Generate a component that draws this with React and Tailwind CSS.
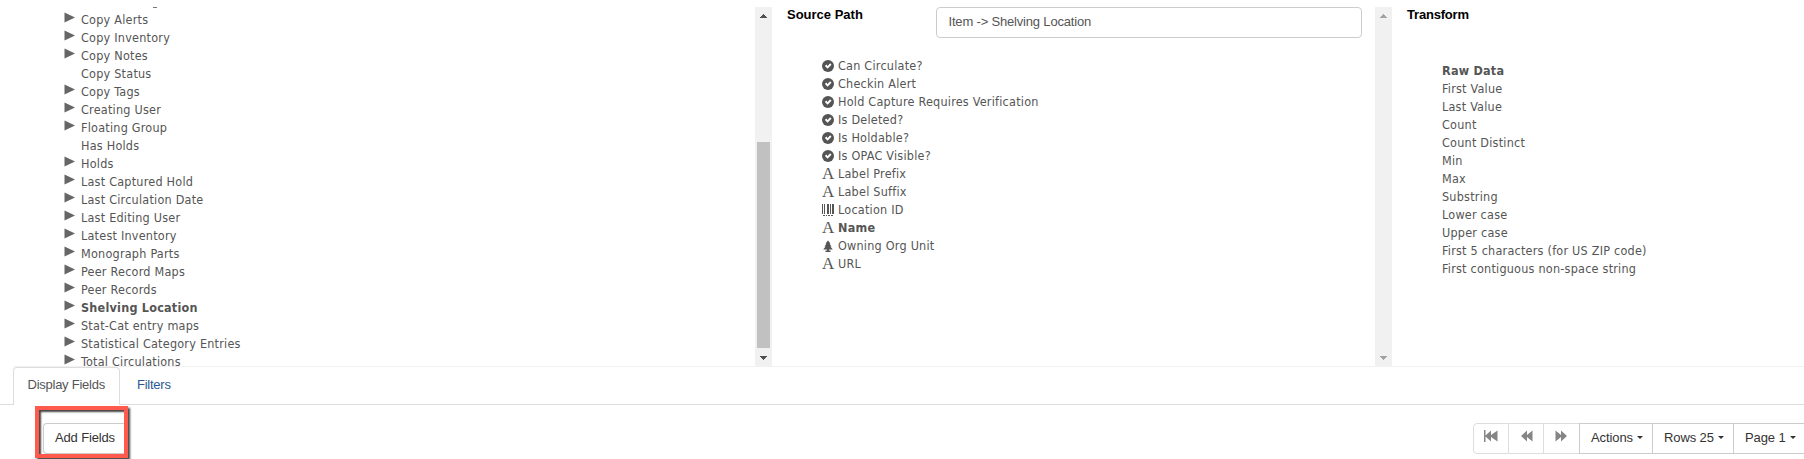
import React from "react";

const tree = [
  ["Copy Alerts", 1], ["Copy Inventory", 1], ["Copy Notes", 1], ["Copy Status", 0],
  ["Copy Tags", 1], ["Creating User", 1], ["Floating Group", 1], ["Has Holds", 0],
  ["Holds", 1], ["Last Captured Hold", 1], ["Last Circulation Date", 1],
  ["Last Editing User", 1], ["Latest Inventory", 1], ["Monograph Parts", 1],
  ["Peer Record Maps", 1], ["Peer Records", 1], ["Shelving Location", 1, true],
  ["Stat-Cat entry maps", 1], ["Statistical Category Entries", 1], ["Total Circulations", 1],
];

const fields = [
  ["Can Circulate?", "bool"], ["Checkin Alert", "bool"],
  ["Hold Capture Requires Verification", "bool"], ["Is Deleted?", "bool"],
  ["Is Holdable?", "bool"], ["Is OPAC Visible?", "bool"], ["Label Prefix", "text"],
  ["Label Suffix", "text"], ["Location ID", "id"], ["Name", "text", true],
  ["Owning Org Unit", "org"], ["URL", "text"],
];

const transforms = [
  "Raw Data", "First Value", "Last Value", "Count", "Count Distinct", "Min", "Max",
  "Substring", "Lower case", "Upper case", "First 5 characters (for US ZIP code)",
  "First contiguous non-space string",
];

const listText =
  "font-['DejaVu_Sans_Condensed','DejaVu_Sans',sans-serif] text-[12.5px] leading-[18px] tracking-[0.23px]";

function FieldIcon({ kind }) {
  if (kind === "text")
    return <span className="w-3 text-center font-['Liberation_Serif',serif] text-[17px] leading-[18px] tracking-normal">A</span>;
  return (
    <svg width="12" height="12" viewBox="0 0 12 12" fill="currentColor">
      {kind === "bool" && (
        <>
          <circle cx="6" cy="6" r="6" />
          <path d="M2.9 5.9 4.3 4.6l1.3 1.3 2.5-2.600 1.400 1.400-3.900 4z" fill="#fff" />
        </>
      )}
      {kind === "id" && (
        <path d="M0 0h1v10H0zM2 0h1v10H2zM5 0h2v10H5zM8 0h1v10H8zM10 0h2v10h-2zM1 11h2v1H1zM4 11h1v1H4zM6 11h2v1H6zM9 11h2v1H9z" />
      )}
      {kind === "org" && (
        <path d="M6 .5 8.500 3.600H7.500L9.500 6.400H8.400L10.800 9.600H7v1h1.500V12H3.500v-1.400H5v-1H1.200L3.600 6.400H2.500L4.500 3.600H3.500z" />
      )}
    </svg>
  );
}

function Scrollbar({ active }) {
  return (
    <div className={`flex h-[359px] w-[17px] shrink-0 flex-col items-center bg-[#f1f1f1] ${active ? "text-[#505050]" : "text-[#a3a3a3]"}`}>
      <svg className="mt-[7px] shrink-0" width="7" height="4" fill="currentColor" shapeRendering="crispEdges">
        <path d="M3 0h1v1H3zM2 1h3v1H2zM1 2h5v1H1zM0 3h7v1H0z" />
      </svg>
      <div className={`mt-[124px] h-[206px] w-[13px] shrink-0 ${active ? "bg-[#c1c1c1]" : ""}`} />
      <svg className="mt-2 shrink-0" width="7" height="4" fill="currentColor" shapeRendering="crispEdges">
        <path d="M0 0h7v1H0zM1 1h5v1H1zM2 2h3v1H2zM3 3h1v1H3z" />
      </svg>
    </div>
  );
}

const Caret = () => (
  <svg className="ml-1" width="6" height="3" fill="#333"><path d="M0 0h6L3 3z" /></svg>
);

const Dropdown = ({ label, className }) => (
  <button className={`flex shrink-0 items-center border-y border-r border-[#ccc] pb-[2px] pl-[11px] text-[#333] ${className}`}>
    <span className="whitespace-nowrap tracking-[-0.1px]">{label}</span>
    <Caret />
  </button>
);

export default function App() {
  return (
    <div className="h-[459px] w-[1804px] overflow-hidden bg-white font-['Liberation_Sans',Arial,sans-serif] text-[14px] text-[#555]">
      <div className="flex h-[366px] items-start pt-[7px]">
        <div className="h-[359px] w-[755px] shrink-0 overflow-hidden pl-16">
          <div className="ml-[89px] h-px w-1 bg-[#777]" />
          <ul className={`pt-[3px] ${listText}`}>
            {tree.map(([name, arrow, bold]) => (
              <li key={name} className="flex h-[18px] whitespace-pre">
                <svg className="mt-px mr-[6px] shrink-0" width="11" height="11" fill="#666">
                  {arrow ? <path d="M.5 .5 11 5.5 .5 10.5z" /> : null}
                </svg>
                <span className={bold ? "font-bold" : ""}>{name}</span>
              </li>
            ))}
          </ul>
        </div>
        <Scrollbar active />
        <div className="h-[359px] w-[603px] shrink-0 pl-[15px]">
          <div className="flex h-[31px]">
            <b className="w-[149px] text-[13px] leading-[15px] text-black">Source Path</b>
            <div className="h-[31px] w-[426px] rounded border border-[#ccc] pl-[11.500px] text-[13px] leading-[27px] tracking-[-0.18px]">{"Item -> Shelving Location"}</div>
          </div>
          <ul className={`mt-[19px] ml-[35px] ${listText}`}>
            {fields.map(([name, kind, bold]) => (
              <li key={name} className="flex h-[18px] items-center gap-1">
                <FieldIcon kind={kind} />
                <span className={bold ? "font-bold" : ""}>{name}</span>
              </li>
            ))}
          </ul>
        </div>
        <Scrollbar />
        <div className="h-[359px] grow pl-[15px]">
          <b className="block h-[31px] text-[13px] leading-[15px] tracking-[-0.2px] text-black">Transform</b>
          <ul className={`mt-6 ml-[35px] ${listText}`}>
            {transforms.map((name, i) => (
              <li key={name} className={i === 0 ? "font-bold" : ""}>{name}</li>
            ))}
          </ul>
        </div>
      </div>
      <div className="ml-[13px] h-px bg-[#f1f1f1]" />
      <nav className="flex h-[38px] border-b border-[#ddd] pl-[13px] text-[13px] leading-[34px] tracking-[-0.25px]">
        <div className="h-[38px] w-[107px] shrink-0 rounded-t border border-b-0 border-[#ddd] bg-white pl-[13.500px]">Display Fields</div>
        <div className="pt-px pl-[17px] text-[#2a5a94]">Filters</div>
      </nav>
      <div className="flex items-start justify-between text-[13px]">
        <div className="mt-px ml-[35px] h-[52px] w-[93px] border-4 border-[#ff5a4c] shadow-[2px_2px_2px_#444,inset_2px_2px_2px_#444]">
          <button className="mt-[13px] ml-1 h-[31px] w-[81px] rounded-l border border-r-0 border-[#ccc] pb-[2px] pl-[11px] text-left tracking-[-0.15px] text-[#333]">Add Fields</button>
        </div>
        <div className="mt-[18px] flex h-[31px] w-[331px] overflow-hidden">
          <div className="flex text-[#858585]">
            <span className="flex w-9 items-start rounded-l border border-[#ddd] pt-[6px] pl-[10px]">
              <svg width="14" height="12" fill="currentColor"><path d="M0 0h1.500v5.500L7 .5v4.500L13.500 .5v11L7 7v4.500L1.500 6.500V12H0z" /></svg>
            </span>
            <span className="flex w-[35px] items-start border-y border-r border-[#ddd] pt-[6px] pl-3">
              <svg width="12" height="12" fill="currentColor"><path d="M0 6l6-5.500v4.500l5.500-4.500v11L6 7v4.500z" /></svg>
            </span>
            <span className="flex w-[35px] items-start border-y border-[#ddd] pt-[6px] pl-[11px]">
              <svg width="12" height="12" fill="currentColor"><path d="M12 6L6 .5v4.500L.5 .5v11L6 7v4.500z" /></svg>
            </span>
          </div>
          <Dropdown label="Actions" className="w-[74px] border-l" />
          <Dropdown label="Rows 25" className="w-[81px]" />
          <Dropdown label="Page 1" className="w-[76px]" />
        </div>
      </div>
    </div>
  );
}
